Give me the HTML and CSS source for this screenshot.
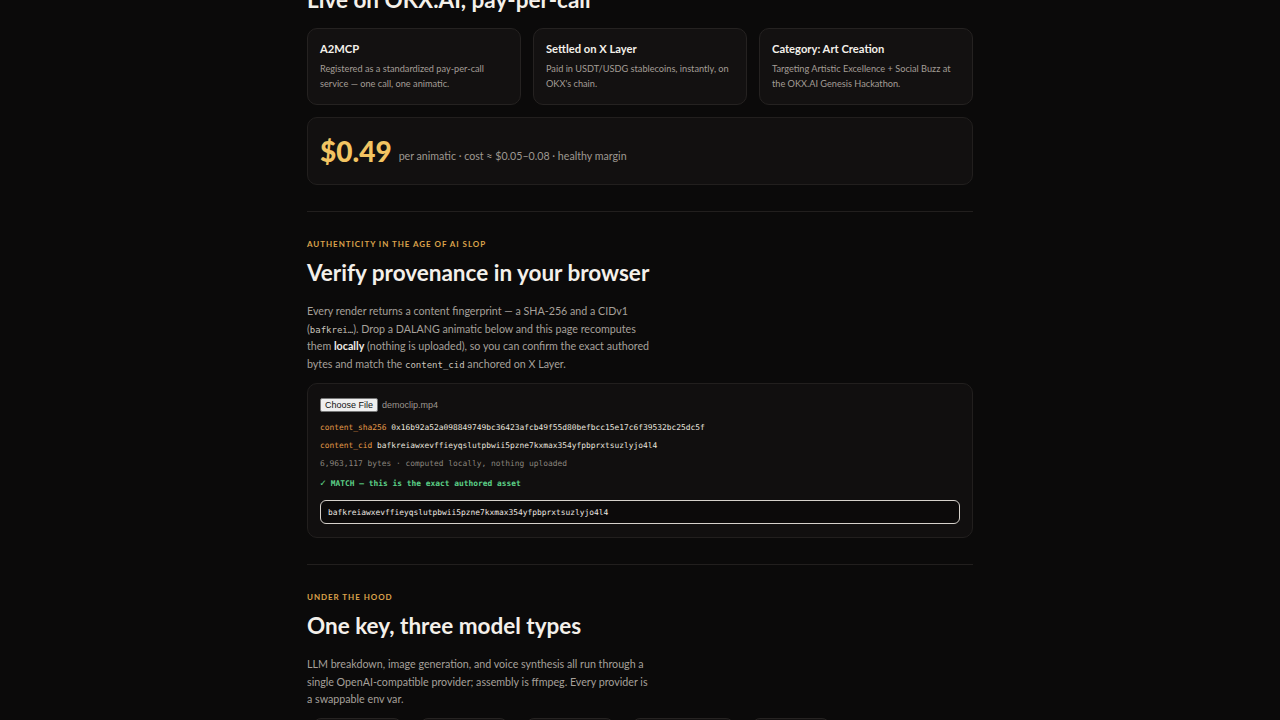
FILE: index.html
```html
<!DOCTYPE html>
<html lang="en">
<head>
    <meta charset="UTF-8">
    <meta name="viewport" content="width=device-width, initial-scale=1.0">
    <title>DALANG · Animatics on demand</title>
    <link rel="stylesheet" href="styles.css">
</head>
<body>
    <main class="wrap">
        <section class="section">
            <h2 class="title">Live on OKX.AI, pay-per-call</h2>
            <div class="cards">
                <div class="card">
                    <div class="card-title">A2MCP</div>
                    <p class="card-text">Registered as a standardized pay-per-call service — one call, one animatic.</p>
                </div>
                <div class="card">
                    <div class="card-title">Settled on X Layer</div>
                    <p class="card-text">Paid in USDT/USDG stablecoins, instantly, on OKX's chain.</p>
                </div>
                <div class="card">
                    <div class="card-title">Category: Art Creation</div>
                    <p class="card-text">Targeting Artistic Excellence + Social Buzz at the OKX.AI Genesis Hackathon.</p>
                </div>
            </div>
            <div class="price-card">
                <span class="price">$0.49</span>
                <span class="price-note">per animatic · cost ≈ $0.05–0.08 · healthy margin</span>
            </div>
        </section>

        <section class="section">
            <div class="eyebrow">Authenticity in the age of AI slop</div>
            <h2 class="title">Verify provenance in your browser</h2>
            <p class="lead">Every render returns a content fingerprint — a SHA-256 and a CIDv1 (<code>bafkrei…</code>). Drop a DALANG animatic below and this page recomputes them <strong>locally</strong> (nothing is uploaded), so you can confirm the exact authored bytes and match the <code>content_cid</code> anchored on X Layer.</p>

            <div class="verify">
                <div class="file-row">
                    <button class="file-btn" id="pickBtn">Choose File</button>
                    <span class="file-name" id="fileName">democlip.mp4</span>
                </div>
                <div class="kv"><span class="key">content_sha256</span> <span class="val">0x16b92a52a098849749bc36423afcb49f55d80befbcc15e17c6f39532bc25dc5f</span></div>
                <div class="kv"><span class="key">content_cid</span> <span class="val">bafkreiawxevffieyqslutpbwii5pzne7kxmax354yfpbprxtsuzlyjo4l4</span></div>
                <div class="kv muted">6,963,117 bytes · computed locally, nothing uploaded</div>
                <div class="match"><span class="tick">✓</span> MATCH — this is the exact authored asset</div>
                <input class="cid-input" type="text" value="bafkreiawxevffieyqslutpbwii5pzne7kxmax354yfpbprxtsuzlyjo4l4">
            </div>
        </section>

        <section class="section">
            <div class="eyebrow">Under the hood</div>
            <h2 class="title">One key, three model types</h2>
            <p class="lead">LLM breakdown, image generation, and voice synthesis all run through a single OpenAI-compatible provider; assembly is ffmpeg. Every provider is a swappable env var.</p>
            <div class="pills">
                <span class="pill pill-a"></span>
                <span class="pill pill-b"></span>
                <span class="pill pill-b"></span>
                <span class="pill pill-c"></span>
                <span class="pill pill-d"></span>
            </div>
        </section>
    </main>
</body>
</html>
```

FILE: styles.css
```css
body {
    margin: 0;
    overflow: hidden;
    background: #0b0a0a;
    color: #ece8e2;
    font-family: Lato, "Noto Sans", sans-serif;
}

.wrap {
    width: 666px;
    margin: -14px auto 0;
}

.section {
    padding: 26px 0 26px;
    border-bottom: 1px solid #221f1e;
}

.section:first-child {
    padding-top: 0;
}

.section:last-child {
    border-bottom: none;
}

.eyebrow {
    font-size: 8px;
    line-height: 12px;
    font-weight: 700;
    letter-spacing: 0.95px;
    text-transform: uppercase;
    color: #dba34c;
    margin-bottom: 9px;
}

.title {
    margin: 0;
    font-size: 22.5px;
    line-height: 28px;
    font-weight: 700;
    color: #f4f0ea;
}

.lead {
    margin: 15px 0 0;
    width: 346px;
    font-size: 10.7px;
    line-height: 17.5px;
    color: #a6a09a;
}

.lead code {
    font-family: "DejaVu Sans Mono", monospace;
    font-size: 9px;
    line-height: 1;
    color: #c9c3bc;
}

.lead strong {
    color: #f1ede7;
}

/* OKX cards */
.cards {
    display: grid;
    grid-template-columns: repeat(3, 1fr);
    gap: 12px;
    margin-top: 14px;
}

.card {
    background: #131111;
    border: 1px solid #252221;
    border-radius: 10px;
    padding: 13px 12px 12px;
    height: 50px;
}

.card-title {
    font-size: 11.2px;
    line-height: 14px;
    font-weight: 700;
    color: #f4f0ea;
}

.card-text {
    margin: 5px 0 0;
    font-size: 9.2px;
    line-height: 15px;
    color: #a39d96;
}

.price-card {
    margin-top: 12px;
    height: 66px;
    background: #121010;
    border: 1px solid #221f1e;
    border-radius: 10px;
    padding: 0 12px;
    display: flex;
    align-items: center;
    gap: 7px;
}

.price {
    font-size: 28px;
    font-weight: 900;
    color: #f2c462;
}

.price-note {
    font-size: 10.65px;
    color: #9e9891;
    margin-top: 9px;
}

/* verify box */
.verify {
    margin-top: 11px;
    background: #110f0f;
    border: 1px solid #221f1e;
    border-radius: 10px;
    padding: 11px 12px 13px;
}

.file-row {
    display: flex;
    align-items: center;
    gap: 4px;
    height: 20px;
}

.file-btn {
    font-family: "Liberation Sans", Arial, sans-serif;
    font-size: 9px;
    line-height: 11px;
    padding: 0 4px;
    height: 14px;
    background: #efefef;
    color: #111;
    border: 1px solid #767676;
    border-radius: 2px;
}

.file-name {
    font-family: "Liberation Sans", Arial, sans-serif;
    font-size: 9px;
    color: #9d978f;
}

.kv {
    margin-top: 6px;
    font-family: "DejaVu Sans Mono", monospace;
    font-size: 7.9px;
    line-height: 12px;
    color: #e9e5df;
}

.kv:nth-child(2) {
    margin-top: 7px;
}

.key {
    color: #e49a48;
}

.muted {
    color: #8b857e;
}

.match {
    margin-top: 8px;
    font-family: "DejaVu Sans Mono", monospace;
    font-size: 7.9px;
    line-height: 12px;
    font-weight: 700;
    color: #5ccf87;
}

.tick {
    font-size: 10px;
    line-height: 1;
}

.cid-input {
    display: block;
    box-sizing: border-box;
    width: 100%;
    height: 24px;
    margin-top: 10px;
    padding: 0 7px;
    background: #0c0a0a;
    border: 1px solid #d6d1cb;
    border-radius: 6px;
    font-family: "DejaVu Sans Mono", monospace;
    font-size: 7.9px;
    color: #ece8e2;
    outline: none;
}

/* stack pills */
.pills {
    display: flex;
    gap: 18px;
    margin-top: 10px;
    padding-left: 6px;
}

.pill {
    height: 22px;
    border: 1px solid #262322;
    background: #131111;
    border-radius: 8px;
}

.pill-a { width: 87px; }
.pill-b { width: 86px; }
.pill-c { width: 100px; }
.pill-d { width: 76px; }
```
